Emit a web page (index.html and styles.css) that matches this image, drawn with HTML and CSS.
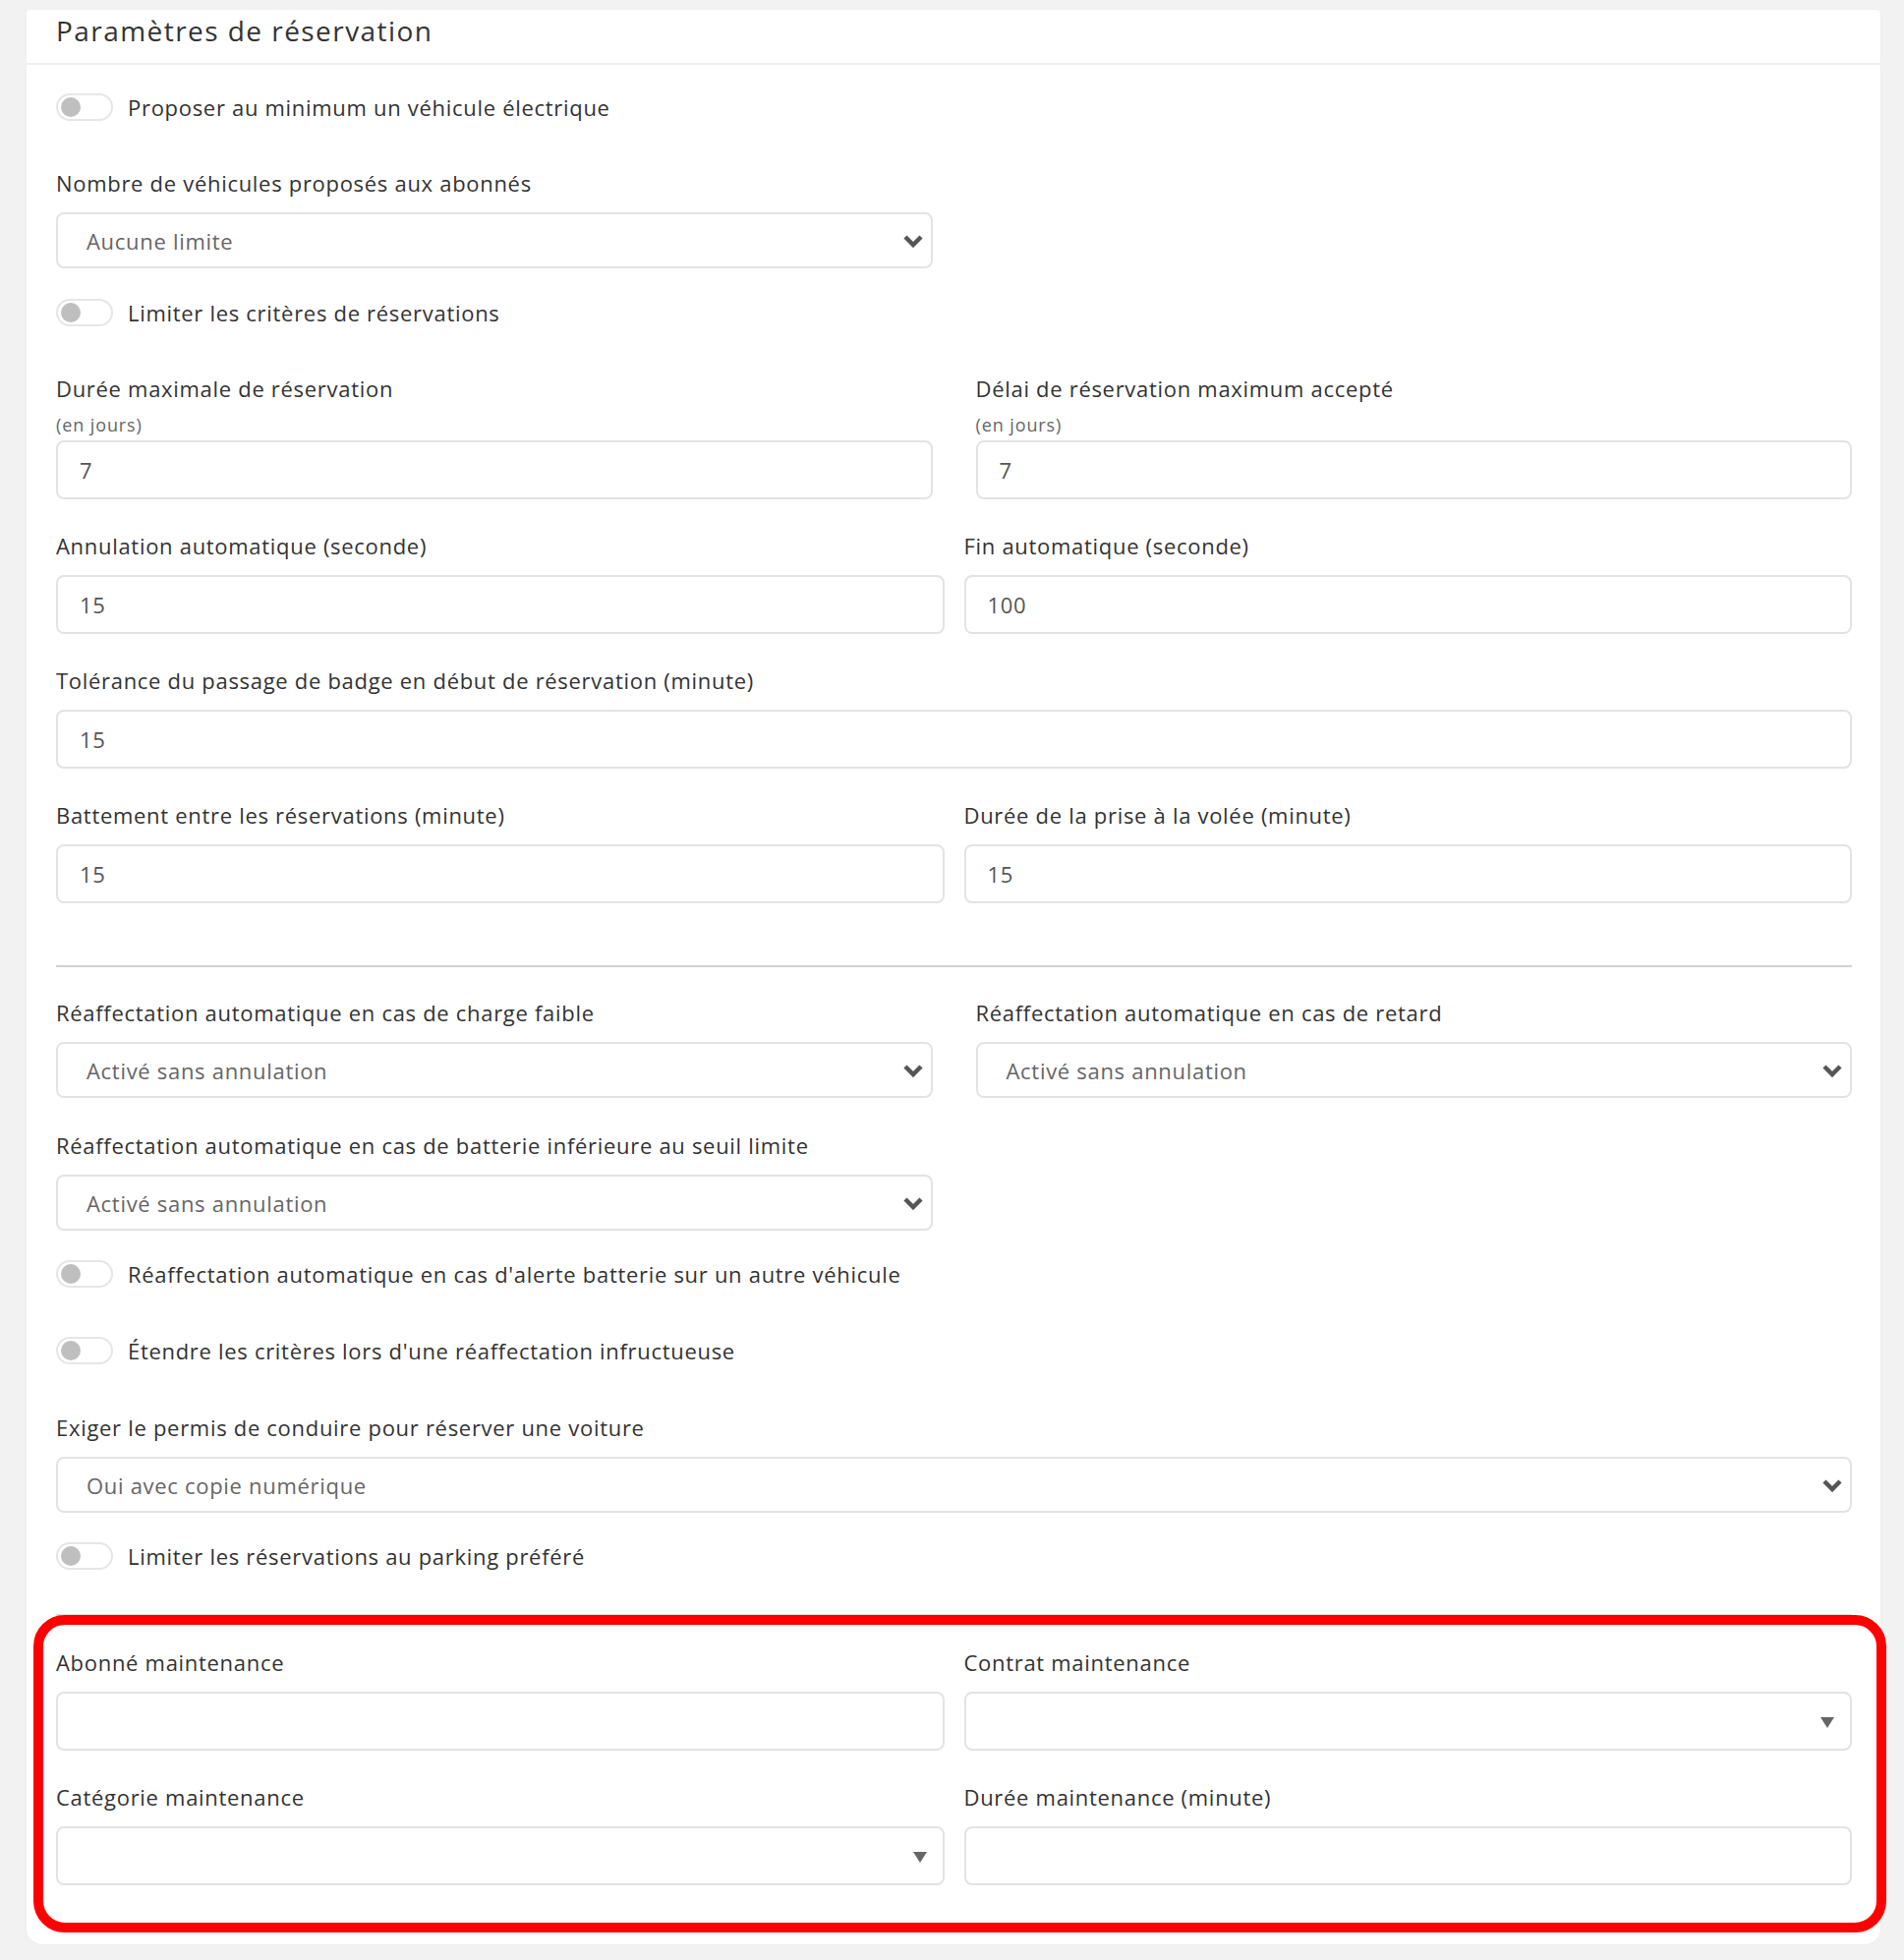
FILE: index.html
```html
<!DOCTYPE html>
<html lang="fr">
<head>
<meta charset="utf-8">
<title>Paramètres de réservation</title>
<link rel="stylesheet" href="styles.css">
</head>
<body>
<div class="page">
  <section class="card">
    <header class="card-header">
      <h2 class="card-title">Paramètres de réservation</h2>
    </header>
    <div class="card-body">

      <div class="toggle-row">
        <span class="toggle"><span class="knob"></span></span>
        <span class="toggle-label">Proposer au minimum un véhicule électrique</span>
      </div>

      <div class="form-group form-group-select-top">
        <label class="label">Nombre de véhicules proposés aux abonnés</label>
        <div class="grid-wide">
          <div class="select">
            <span class="select-value">Aucune limite</span>
            <svg class="chevron" viewBox="0 0 22 14"><polyline points="3,3 11,11 19,3"/></svg>
          </div>
          <div></div>
        </div>
      </div>

      <div class="toggle-row">
        <span class="toggle"><span class="knob"></span></span>
        <span class="toggle-label">Limiter les critères de réservations</span>
      </div>

      <div class="grid-wide">
        <div class="form-group">
          <label class="label">Durée maximale de réservation</label>
          <div class="hint">(en jours)</div>
          <input class="input" type="text" value="7">
        </div>
        <div class="form-group">
          <label class="label">Délai de réservation maximum accepté</label>
          <div class="hint">(en jours)</div>
          <input class="input" type="text" value="7">
        </div>
      </div>

      <div class="grid-tight">
        <div class="form-group">
          <label class="label">Annulation automatique (seconde)</label>
          <input class="input" type="text" value="15">
        </div>
        <div class="form-group">
          <label class="label">Fin automatique (seconde)</label>
          <input class="input" type="text" value="100">
        </div>
      </div>

      <div class="form-group">
        <label class="label">Tolérance du passage de badge en début de réservation (minute)</label>
        <input class="input" type="text" value="15">
      </div>

      <div class="grid-tight">
        <div class="form-group">
          <label class="label">Battement entre les réservations (minute)</label>
          <input class="input" type="text" value="15">
        </div>
        <div class="form-group">
          <label class="label">Durée de la prise à la volée (minute)</label>
          <input class="input" type="text" value="15">
        </div>
      </div>

      <hr class="divider divider-mid">

      <div class="grid-wide">
        <div class="form-group form-group-select">
          <label class="label">Réaffectation automatique en cas de charge faible</label>
          <div class="select">
            <span class="select-value">Activé sans annulation</span>
            <svg class="chevron" viewBox="0 0 22 14"><polyline points="3,3 11,11 19,3"/></svg>
          </div>
        </div>
        <div class="form-group form-group-select">
          <label class="label">Réaffectation automatique en cas de retard</label>
          <div class="select">
            <span class="select-value">Activé sans annulation</span>
            <svg class="chevron" viewBox="0 0 22 14"><polyline points="3,3 11,11 19,3"/></svg>
          </div>
        </div>
      </div>

      <div class="form-group form-group-select-tight">
        <label class="label">Réaffectation automatique en cas de batterie inférieure au seuil limite</label>
        <div class="grid-wide">
          <div class="select">
            <span class="select-value">Activé sans annulation</span>
            <svg class="chevron" viewBox="0 0 22 14"><polyline points="3,3 11,11 19,3"/></svg>
          </div>
          <div></div>
        </div>
      </div>

      <div class="toggle-row toggle-row-wide">
        <span class="toggle"><span class="knob"></span></span>
        <span class="toggle-label">Réaffectation automatique en cas d'alerte batterie sur un autre véhicule</span>
      </div>

      <div class="toggle-row toggle-row-wide">
        <span class="toggle"><span class="knob"></span></span>
        <span class="toggle-label">Étendre les critères lors d'une réaffectation infructueuse</span>
      </div>

      <div class="form-group form-group-select-tight">
        <label class="label">Exiger le permis de conduire pour réserver une voiture</label>
        <div class="select">
          <span class="select-value">Oui avec copie numérique</span>
          <svg class="chevron" viewBox="0 0 22 14"><polyline points="3,3 11,11 19,3"/></svg>
        </div>
      </div>

      <div class="toggle-row toggle-row-last">
        <span class="toggle"><span class="knob"></span></span>
        <span class="toggle-label">Limiter les réservations au parking préféré</span>
      </div>

      <hr class="divider divider-bottom">

      <div class="maintenance">
        <div class="grid-tight">
          <div class="form-group">
            <label class="label">Abonné maintenance</label>
            <input class="input" type="text" value="">
          </div>
          <div class="form-group">
            <label class="label">Contrat maintenance</label>
            <div class="input combo"><span class="caret"></span></div>
          </div>
        </div>
        <div class="grid-tight">
          <div class="form-group form-group-last">
            <label class="label">Catégorie maintenance</label>
            <div class="input combo"><span class="caret"></span></div>
          </div>
          <div class="form-group form-group-last">
            <label class="label">Durée maintenance (minute)</label>
            <input class="input" type="text" value="">
          </div>
        </div>
        <div class="highlight"></div>
      </div>

    </div>
  </section>
</div>
</body>
</html>
```

FILE: styles.css
```css
* { box-sizing: border-box; }

html, body {
  margin: 0;
  padding: 0;
  background: #f2f2f2;
}

body {
  font-family: "Open Sans", "Noto Sans", "Liberation Sans", sans-serif;
  color: #333;
  font-size: 22px;
  letter-spacing: 0.7px;
}

.page {
  padding: 10px 24px 14px 27px;
}

.card {
  background: #fff;
  border-radius: 4px 4px 16px 16px;
  box-shadow: 0 0 3px rgba(0, 0, 0, 0.04);
}

.card-header {
  padding: 4px 30px 16px 30px;
  border-bottom: 2px solid #efefef;
}

.card-title {
  margin: 0;
  font-size: 28px;
  line-height: 34px;
  font-weight: 400;
  letter-spacing: 1.45px;
  color: #333;
}

.card-body {
  padding: 29px 29px 60px 30px;
}

/* toggles */
.toggle-row {
  display: flex;
  align-items: center;
  gap: 15px;
  height: 28px;
  margin-bottom: 49px;
}

.toggle-row-wide {
  margin-bottom: 50px;
}

.toggle-row-last {
  margin-bottom: 45px;
}

.toggle {
  flex: none;
  position: relative;
  width: 58px;
  height: 28px;
  border: 2px solid #e6e6e6;
  border-radius: 14px;
  background: #fff;
}

.knob {
  position: absolute;
  left: 3px;
  top: 2px;
  width: 20px;
  height: 20px;
  border-radius: 50%;
  background: #bfbfbf;
}

.toggle-label {
  line-height: 28px;
  white-space: nowrap;
}

/* form groups */
.form-group {
  margin-bottom: 33px;
}

.form-group-select {
  margin-bottom: 34px;
}

.form-group-select-top {
  margin-bottom: 31px;
}

.form-group-select-tight {
  margin-bottom: 30px;
}

.form-group-select-tight + .toggle-row-last {
  margin-top: 4px;
}

.form-group-last {
  margin-bottom: 0;
}

.label {
  display: block;
  line-height: 28px;
  margin-bottom: 16px;
  white-space: nowrap;
}

.hint {
  font-size: 18px;
  line-height: 24px;
  letter-spacing: 0.9px;
  color: #666;
  margin-top: -5px;
  margin-bottom: 4px;
}

.grid-wide {
  display: grid;
  grid-template-columns: 1fr 1fr;
  column-gap: 44px;
}

.grid-tight {
  display: grid;
  grid-template-columns: 1fr 1fr;
  column-gap: 20px;
}

.input {
  display: block;
  width: 100%;
  height: 60px;
  padding: 0 22px;
  border: 2px solid #e3e3e3;
  border-radius: 8px;
  background: #fff;
  font-family: inherit;
  font-size: 22px;
  letter-spacing: 0.7px;
  color: #555;
  outline: none;
}

.combo {
  position: relative;
}

.caret {
  position: absolute;
  right: 16px;
  top: 24px;
  width: 0;
  height: 0;
  border-left: 7px solid transparent;
  border-right: 7px solid transparent;
  border-top: 11px solid #666;
}

.select {
  display: flex;
  align-items: center;
  justify-content: space-between;
  height: 57px;
  padding: 0 7px 0 29px;
  border: 2px solid #e3e3e3;
  border-radius: 8px;
  background: #fff;
  color: #666;
}

.chevron {
  flex: none;
  width: 22px;
  height: 14px;
  fill: none;
  stroke: #555;
  stroke-width: 4.5;
}

.divider {
  border: 0;
  height: 2px;
  margin: 0;
}

.divider-mid {
  background: #d2d2d2;
  margin-top: 30px;
  margin-bottom: 32px;
}

.divider-bottom {
  background: #dcdcdc;
  margin-bottom: 33px;
}

/* maintenance block, annotated with red highlight */
.maintenance {
  position: relative;
}

.highlight {
  position: absolute;
  left: -23px;
  right: -35px;
  top: -34px;
  bottom: -48px;
  border: 10px solid #ff0000;
  border-radius: 32px;
  pointer-events: none;
}
```
